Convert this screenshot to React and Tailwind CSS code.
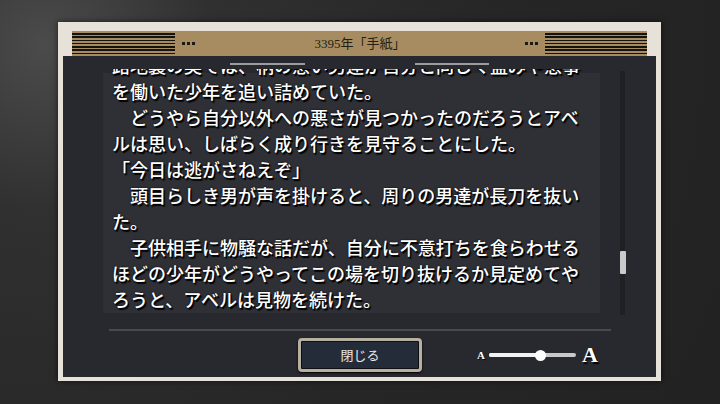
import React from 'react';

const lines = [
  '路地裏の奥では、柄の悪い男達が自分と同じく盗みや悪事',
  'を働いた少年を追い詰めていた。',
  '　どうやら自分以外への悪さが見つかったのだろうとアベ',
  'ルは思い、しばらく成り行きを見守ることにした。',
  '「今日は逃がさねえぞ」',
  '　頭目らしき男が声を掛けると、周りの男達が長刀を抜い',
  'た。',
  '　子供相手に物騒な話だが、自分に不意打ちを食らわせる',
  'ほどの少年がどうやってこの場を切り抜けるか見定めてや',
  'ろうと、アベルは見物を続けた。',
];

// ヘッダー両端の横縞
const Stripes = ({ w }) => (
  <div className={`flex h-full flex-col justify-between py-[2px] ${w}`}>
    {[0, 1, 2, 3, 4, 5, 6].map((i) => (
      <div key={i} className="h-[1.5px] w-full bg-[#15130f]" />
    ))}
  </div>
);

const Dots = () => (
  <div className="flex items-center gap-[2px]">
    <div className="h-[3px] w-[3px] bg-[#1c1a16]" />
    <div className="h-[3px] w-[3px] bg-[#1c1a16]" />
    <div className="h-[3px] w-[3px] bg-[#1c1a16]" />
  </div>
);

export default function App() {
  return (
    <div className="h-[404px] w-[720px] overflow-hidden bg-[radial-gradient(circle_at_45px_45px,#4b4b4b_0%,#303030_22%,#262626_60%,#222222_100%)] pl-[58px] pt-[22px]">
      {/* 外枠 */}
      <div className="flex h-[359px] w-[603px] flex-col bg-[#e6e1d9] px-[5px] pb-[4px] pt-[9px] shadow-[0_0_6px_rgba(0,0,0,0.6)]">
        {/* ヘッダー */}
        <div className="mx-[9px] flex h-[25px] items-center bg-[#a68c60] shadow-[0_1px_0_#3a3226]">
          <Stripes w="w-[103px]" />
          <div className="ml-[7px]"><Dots /></div>
          <div className="flex-1 text-center text-[13px] text-[#241f15] [font-family:'Liberation_Serif','Noto_Sans_CJK_JP',serif]">
            3395年「手紙」
          </div>
          <div className="mr-[7px]"><Dots /></div>
          <Stripes w="w-[102px]" />
        </div>

        {/* 本体パネル */}
        <div className="flex h-[321px] flex-col bg-[#28292e] pb-[5px] pt-[7px] [font-family:'Noto_Sans_CJK_JP',sans-serif]">
          <div className="flex h-[2px]">
            <div className="ml-[167px] h-[2px] w-[75px] bg-[#9c9c9c]" />
            <div className="ml-[110px] h-[2px] w-[74px] bg-[#9c9c9c]" />
          </div>

          <div className="mt-[4px] flex h-[244px] items-start">
            <div className="ml-[40px] grid h-[244px] w-[497px] overflow-hidden">
              <div className="mt-[4px] bg-[#2f3036] [grid-area:1/1]" />
              <div className="mt-[-17px] pl-[9px] text-[18px] font-medium leading-[26px] text-white [grid-area:1/1] [text-shadow:1.5px_2px_1px_#000,0_0_2px_#000]">
                {lines.map((l, i) => (
                  <div key={i} className="whitespace-nowrap">{l}</div>
                ))}
              </div>
            </div>
            {/* スクロールバー */}
            <div className="ml-[20px] mt-[2px] flex h-[244px] w-[5px] flex-col bg-[#1f2024]">
              <div className="mt-[180px] h-[23px] w-[6px] rounded-[1px] bg-[#cacaca]" />
            </div>
          </div>

          <div className="ml-[46px] mt-[16px] h-[2px] w-[502px] bg-[#464a52]" />

          <div className="mt-[7px] flex h-[34px] items-center">
            <button className="ml-[235px] flex h-[34px] w-[124px] items-center justify-center rounded-[4px] border-[3px] border-[#b7b0a1] bg-[#242c39] text-[13px] text-[#e8e8e8] shadow-[inset_0_0_0_1px_#0d0f13,0_1px_2px_#000]">
              閉じる
            </button>
            <div className="ml-[55px] flex items-center">
              <span className="text-[11px] font-bold leading-none text-white [font-family:'Liberation_Serif',serif] [text-shadow:1px_1px_1px_#000]">A</span>
              <div className="ml-[4px] flex h-[4px] w-[87px] items-center rounded-full bg-[#c9c9c9]">
                <div className="h-[4px] w-[52px] rounded-full bg-[#f2f2f2]" />
                <div className="-ml-[6px] h-[11px] w-[11px] rounded-full bg-white" />
              </div>
              <span className="ml-[6px] text-[22px] font-bold leading-none text-white [font-family:'Liberation_Serif',serif] [text-shadow:1.5px_1.5px_1px_#000]">A</span>
            </div>
          </div>
        </div>
      </div>
    </div>
  );
}
